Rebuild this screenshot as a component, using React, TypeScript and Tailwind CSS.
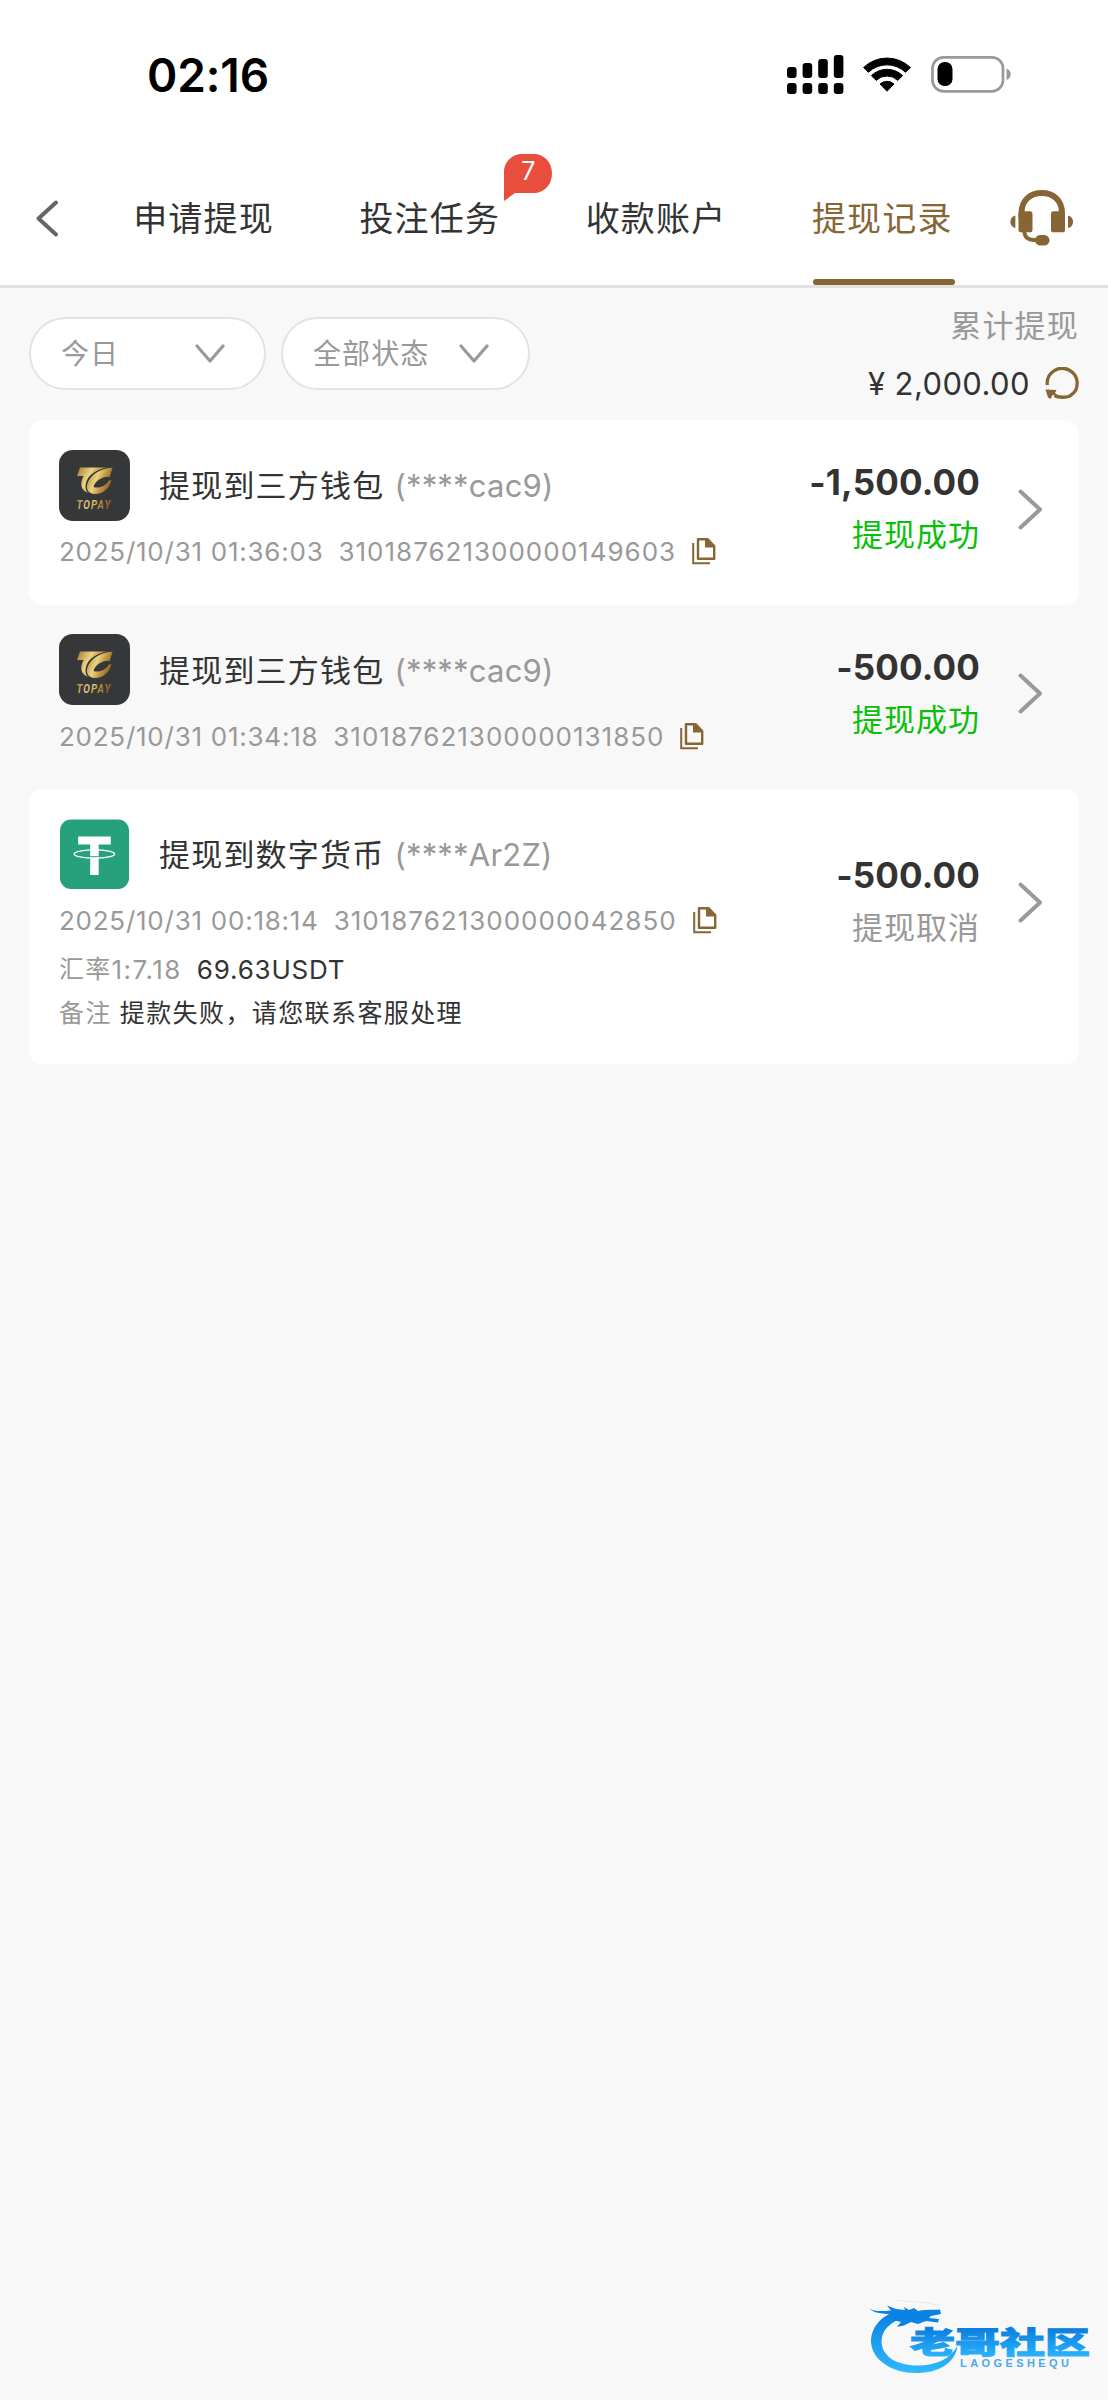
import { ReactNode } from "react";
import clsx from "clsx";

type WithdrawRecord = {
  id: string;
  wallet: "topay" | "tether";
  title: string;
  account: string;
  time: string;
  amount: string;
  status: "success" | "cancelled";
  rate?: string;
  received?: string;
  note?: string;
};

const tabs = [
  { label: "申请提现" },
  { label: "投注任务", badge: 7 },
  { label: "收款账户" },
  { label: "提现记录", active: true },
];

const records: WithdrawRecord[] = [
  {
    id: "310187621300000149603",
    wallet: "topay",
    title: "提现到三方钱包",
    account: "(****cac9)",
    time: "2025/10/31 01:36:03",
    amount: "-1,500.00",
    status: "success",
  },
  {
    id: "310187621300000131850",
    wallet: "topay",
    title: "提现到三方钱包",
    account: "(****cac9)",
    time: "2025/10/31 01:34:18",
    amount: "-500.00",
    status: "success",
  },
  {
    id: "310187621300000042850",
    wallet: "tether",
    title: "提现到数字货币",
    account: "(****Ar2Z)",
    time: "2025/10/31 00:18:14",
    amount: "-500.00",
    status: "cancelled",
    rate: "1:7.18",
    received: "69.63USDT",
    note: "提款失败，请您联系客服处理",
  },
];

function StatusBar() {
  return (
    <div className="flex h-[148px] items-start justify-between pl-[147px] pr-[95px] pt-[47px]">
      <span className="text-[46px] font-semibold leading-[56px] tracking-[-0.1px] text-black">
        02:16
      </span>
      <div className="flex items-start pt-[8px]">
        <svg width="57" height="39" viewBox="0 0 57 39">
          <rect x="0" y="12" width="9.6" height="11" rx="3" />
          <rect x="15.6" y="8" width="9.6" height="15" rx="3" />
          <rect x="31.2" y="4" width="9.6" height="19" rx="3" />
          <rect x="46.8" y="0" width="9.6" height="23" rx="3" />
          <rect x="0" y="28" width="9.6" height="11" rx="3" />
          <rect x="15.6" y="28" width="9.6" height="11" rx="3" />
          <rect x="31.2" y="28" width="9.6" height="11" rx="3" />
          <rect x="46.8" y="28" width="9.6" height="11" rx="3" />
        </svg>
        <svg width="50" height="38" viewBox="0 0 50 38" className="ml-[18px]">
          <path d="M1.6 12.4 A34 34 0 0 1 48.4 12.4 L43.6 17.3 A27 27 0 0 0 6.4 17.3 Z" strokeWidth="1" stroke="#000" strokeLinejoin="round" />
          <path d="M9.4 20.6 A22.5 22.5 0 0 1 40.6 20.6 L35.8 25.4 A15.5 15.5 0 0 0 14.2 25.4 Z" strokeWidth="1" stroke="#000" strokeLinejoin="round" />
          <path d="M18 29 A10.5 10.5 0 0 1 32 29 L25 36.2 Z" strokeWidth="1" stroke="#000" strokeLinejoin="round" />
        </svg>
        <svg width="82" height="38" viewBox="0 0 82 38" className="ml-[19px]">
          <rect x="1.5" y="2.3" width="70.5" height="34" rx="11" fill="none" stroke="#999" strokeWidth="2.7" />
          <rect x="6.5" y="7" width="15" height="24" rx="7" />
          <path d="M75.5 13.5 C81 15.5 81 23 75.5 25 Z" fill="#999" />
        </svg>
      </div>
    </div>
  );
}

function Header() {
  return (
    <div className="flex h-[137px] items-stretch pl-[35px]">
      <svg width="24" height="37" viewBox="0 0 24 37" className="mt-[52px]">
        <path d="M21 2.5 L3.5 18.5 L21 34.5" fill="none" stroke="#666" strokeWidth="4" strokeLinecap="round" strokeLinejoin="round" />
      </svg>
      <div className="ml-[32px] flex w-[905px]">
        {tabs.map((tab) => (
          <div key={tab.label} className="flex flex-1 justify-center">
            <div
              className={clsx(
                "relative flex h-full w-[142px] items-center whitespace-nowrap pt-[3px] text-[34px] tracking-[1.2px]",
                tab.active ? "text-[#876636]" : "text-[#333]"
              )}
            >
              {tab.label}
              {tab.active && (
                <span className="absolute bottom-0 left-px h-[6px] w-full rounded-[3px] bg-[#876636]" />
              )}
              {tab.badge && <Badge>{tab.badge}</Badge>}
            </div>
          </div>
        ))}
      </div>
      <Headset />
    </div>
  );
}

function Badge({ children }: { children: ReactNode }) {
  return (
    <span className="absolute left-[145px] top-[6px] h-[47px] w-[48px]">
      <svg width="48" height="47" viewBox="0 0 48 47" className="absolute inset-0">
        <path d="M18 0 H30 C40 0 48 8 48 19.5 C48 31 40 39 30 39 H11 L0 47 V18 C0 8 8 0 18 0 Z" fill="#e94e3d" />
      </svg>
      <span className="absolute inset-x-0 top-0 text-center text-[25px] leading-[35px] tracking-normal text-white">
        {children}
      </span>
    </span>
  );
}

function Headset() {
  return (
    <svg width="64" height="58" viewBox="0 0 64 58" className="ml-[14px] mt-[41px]" fill="#876636">
      <path d="M11.5 30 V24 C11.5 11 20.5 4 31.8 4 C43 4 52 11 52 24 V30" fill="none" stroke="#876636" strokeWidth="6" />
      <rect x="8.5" y="22.3" width="14" height="21" rx="2.6" />
      <rect x="41" y="22.3" width="14" height="21" rx="2.6" />
      <path d="M5.4 26.4 V39 C-1.3 37.5 -1.3 27.8 5.4 26.4 Z" />
      <path d="M58 26.4 V39 C64.8 37.5 64.8 27.8 58 26.4 Z" />
      <path d="M14.3 41 C14.3 48 17 51.2 27 51.2" fill="none" stroke="#876636" strokeWidth="4" />
      <rect x="25" y="46" width="14.5" height="10.4" rx="5.2" />
    </svg>
  );
}

function Select({ label, className }: { label: string; className: string }) {
  return (
    <div
      className={clsx(
        "flex h-[73px] items-center justify-between rounded-full border-2 border-[#e3e3e3] bg-white pl-[30px] text-[28px] tracking-[1.1px] text-[#999]",
        className
      )}
    >
      {label}
      <svg width="30" height="20" viewBox="0 0 30 20">
        <path d="M2 2 L15 17 L28 2" fill="none" stroke="#999" strokeWidth="3.2" strokeLinecap="round" strokeLinejoin="round" />
      </svg>
    </div>
  );
}

function Filters() {
  return (
    <div className="flex h-[132px] items-start px-[29px]">
      <Select label="今日" className="mt-[29px] w-[237px] pr-[39px]" />
      <Select label="全部状态" className="ml-[15px] mt-[29px] w-[249px] pr-[39px]" />
      <div className="ml-auto flex flex-col items-end">
        <span className="mt-[18px] text-[31px] leading-[40px] tracking-[1.2px] text-[#999]">
          累计提现
        </span>
        <div className="mt-[15px] flex items-center">
          <span className="pt-px text-[31px] leading-[43px] tracking-[0.4px] text-[#333]">¥ 2,000.00</span>
          <svg width="34" height="33" viewBox="0 0 34 33" className="ml-[15px]">
            <path d="M2.2 18 V17 A15 14.8 0 1 1 25.5 28.5 C22.5 30.8 13 30.8 9.5 28.5" fill="none" stroke="#876636" strokeWidth="3.3" />
            <path d="M0.5 22.5 L11.5 23 L10 26 L13 28.5 L7.5 28 L5.5 32 L3 30.5 Z" fill="#876636" />
          </svg>
        </div>
      </div>
    </div>
  );
}

function TopayLogo() {
  return (
    <svg width="71" height="71" viewBox="0 0 71 71">
      <defs>
        <linearGradient id="gold" x1="0" y1="0" x2="1" y2="0.4">
          <stop offset="0" stopColor="#a47a2f" />
          <stop offset="0.45" stopColor="#ecd383" />
          <stop offset="0.7" stopColor="#c69b45" />
          <stop offset="1" stopColor="#8d6527" />
        </linearGradient>
      </defs>
      <rect width="71" height="71" rx="14" fill="#363739" />
      <path d="M21 17.5 H48 C38 19.5 31 24 28 30 C26 35 26 39.5 29 42.8 C22 40.5 20.5 34 24.5 26 H18 Z" fill="url(#gold)" />
      <path
        d="M53.5 17.8 L50.8 27 C44 26 36 31 34.5 37 C40 39 46.5 36 50 30.5 L52.3 30 C51.5 38 44 44 36 44 C28.5 43.8 26 38 29.5 31 C34 23 43.5 18.2 53.5 17.8 Z"
        fill="url(#gold)"
      />
      <text
        x="17.5"
        y="59"
        fontSize="13.5"
        fontWeight="600"
        fontStyle="italic"
        fontFamily="Roboto, sans-serif"
        textLength="35"
        lengthAdjust="spacingAndGlyphs"
        letterSpacing="1.5"
        fill="url(#gold)"
      >
        TOPAY
      </text>
    </svg>
  );
}

function TetherLogo() {
  return (
    <svg width="71" height="71" viewBox="0 0 71 71">
      <rect x="1" y="0.5" width="69" height="69.5" rx="11" fill="#27a17c" />
      <path d="M19.2 17.5 H51.8 V25.5 H39.7 V56 H31.2 V25.5 H19.2 Z" fill="#fff" />
      <path d="M31.2 37.8 H39.7" stroke="#27a17c" strokeWidth="1.2" />
      <ellipse cx="35.4" cy="35" rx="20.3" ry="4.2" fill="none" stroke="#fff" strokeWidth="1.3" />
    </svg>
  );
}

function CopyIcon() {
  return (
    <svg width="24" height="27" viewBox="0 0 24 27" className="ml-[16px]">
      <path d="M6 1.2 H15.5 L22.2 8 V20.8 H6 Z" fill="none" stroke="#876636" strokeWidth="2.4" strokeLinejoin="round" />
      <path d="M13 1 H16 L23 8 V9.5 H13 Z" fill="#876636" />
      <path d="M1.2 5 V25.2 H18" fill="none" stroke="#876636" strokeWidth="2" />
    </svg>
  );
}

function RecordCard({ record, striped }: { record: WithdrawRecord; striped: boolean }) {
  const success = record.status === "success";

  return (
    <div className={clsx("rounded-[14px] px-[30px] pt-[30px]", striped && "bg-white", record.note ? "pb-[34px]" : "pb-[36.5px]")}>
      <div className="flex items-center">
        <div>
          <div className="flex h-[70px] items-center">
            {record.wallet === "topay" ? <TopayLogo /> : <TetherLogo />}
            <p className="ml-[29px] whitespace-pre pt-[2px] text-[31px] leading-[40px] tracking-[1.2px] text-[#333]">
              {record.title}
              <span className="ml-[10px] tracking-[0.2px] text-[#999]">{record.account}</span>
            </p>
          </div>
          <div className="mt-[15px] flex h-[33px] items-center text-[26px] text-[#999]">
            <span className="tracking-[0.75px]">{record.time}</span>
            <span className="ml-[15px] tracking-[1px]">{record.id}</span>
            <CopyIcon />
          </div>
          {record.rate && (
            <div className="mt-[16px] flex h-[32px] items-center text-[26px] tracking-[0.8px] text-[#999]">
              <span className="pt-px text-[25px] tracking-[1.2px]">汇率</span>
              <span className="tracking-[1.5px]">{record.rate}</span>
              <span className="ml-[15px] text-[#333]">{record.received}</span>
            </div>
          )}
        </div>
        <div className="ml-auto flex items-center">
          <div className="flex flex-col items-end">
            <span className="text-[35px] font-bold leading-[40px] tracking-[0.15px] text-[#333]">
              {record.amount}
            </span>
            <span
              className={clsx(
                "mt-[12px] text-[31px] leading-[42px] tracking-[1px]",
                success ? "text-[#0abf0a]" : "text-[#999]"
              )}
            >
              {success ? "提现成功" : "提现取消"}
            </span>
          </div>
          <svg width="25" height="41" viewBox="0 0 25 41" className="ml-[38px] mr-[6px]">
            <path d="M2.5 2.5 L22 20.5 L2.5 38.5" fill="none" stroke="#999" strokeWidth="4" strokeLinecap="round" strokeLinejoin="round" />
          </svg>
        </div>
      </div>
      {record.note && (
        <p className="mt-[11px] h-[34px] text-[25px] leading-[34px] tracking-[1.4px] text-[#999]">
          备注
          <span className="ml-[8px] text-[#333]">{record.note}</span>
        </p>
      )}
    </div>
  );
}

// Community logo, pinned to the bottom right corner
function Watermark() {
  return (
    <svg width="224" height="80" viewBox="0 0 224 80" className="absolute bottom-[24px] right-[16px]">
      <defs>
        <linearGradient id="water" x1="0" y1="0" x2="0" y2="1">
          <stop offset="0" stopColor="#0a7fe0" />
          <stop offset="1" stopColor="#2fb9ff" />
        </linearGradient>
        <linearGradient id="waterText" x1="0" y1="0.25" x2="0" y2="0.95">
          <stop offset="0" stopColor="#0a7fe0" />
          <stop offset="1" stopColor="#2fb9ff" />
        </linearGradient>
      </defs>
      <path
        d="M29 15 C12 20 3 32 3 46 C4 64 24 77 48 77 C71 77 87 67 89.5 50 C82 63 68 69.5 50 69.5 C28 69.5 13.5 60 13.5 45 C14 34 22 26 38 20 Z"
        fill="url(#water)"
      />
      <path
        d="M1 12.5 C6 15.5 14 15.5 23 14.5 L19 9.5 L28 13 L37 14 L36 11 L41 14 L46 12 L50 15 C58 13 66 14 72 13.5 L73 18 L63 20 L61 22 L71 23 L70 26.5 L58 25 L50 28 L43 26 L36 29.5 L29 31 L33 26 L24 24 L27 18 C18 18 7 18 1 12.5 Z"
        fill="#0a83e4"
      />
      <path d="M29 4 C42 7 66 4 72 12" fill="none" stroke="#d5e8f6" strokeWidth="0.8" />
      <text
        x="42"
        y="57"
        fontSize="30"
        fontWeight="900"
        fontFamily="'Noto Sans CJK SC', sans-serif"
        textLength="180"
        lengthAdjust="spacingAndGlyphs"
        stroke="url(#waterText)"
        strokeWidth="1"
        fill="url(#waterText)"
      >
        老哥社区
      </text>
      <text
        x="92"
        y="71"
        fontSize="11"
        fontWeight="700"
        fontFamily="'Liberation Sans', sans-serif"
        textLength="112"
        letterSpacing="3"
        fill="#4aa9ea"
      >
        LAOGESHEQU
      </text>
    </svg>
  );
}

export default function App() {
  return (
    <div className="relative h-[2400px] w-[1108px] overflow-hidden bg-[#f8f8f8] font-['Inter','Noto_Sans_CJK_SC',sans-serif]">
      <header className="border-b-[3px] border-[#e2e2e2] bg-white">
        <StatusBar />
        <Header />
      </header>
      <Filters />
      <main className="mx-[29px]">
        {records.map((record, index) => (
          <RecordCard key={record.id} record={record} striped={index % 2 === 0} />
        ))}
      </main>
      <Watermark />
    </div>
  );
}
